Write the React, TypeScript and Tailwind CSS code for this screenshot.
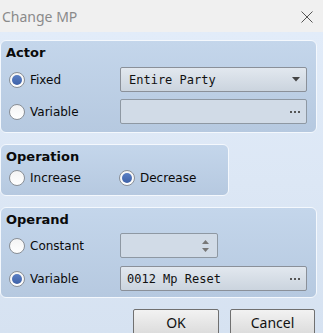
import React from "react";

const ui = { fontFamily: '"DejaVu Sans", Verdana, sans-serif' };
const mono = { fontFamily: '"DejaVu Sans Mono", "Liberation Mono", monospace' };

interface RadioProps {
  label: string;
  checked?: boolean;
  width?: string;
}

const Radio: React.FC<RadioProps> = ({ label, checked, width = "w-[111px]" }) => {
  return (
    <div className={`flex flex-row items-center gap-[5px] shrink-0 ${width}`}>
      <div className="w-[16px] h-[16px] rounded-full border border-[#8a8f96] bg-gradient-to-b from-[#f4f4f4] to-[#ffffff] flex items-center justify-center shrink-0">
        {checked && (
          <div className="w-[10px] h-[10px] rounded-full bg-gradient-to-b from-[#5a7fc4] to-[#3f62a8]" />
        )}
      </div>
      <span className="text-[12px] leading-[16px] text-[#0a0a0a]" style={ui}>
        {label}
      </span>
    </div>
  );
};

const Dots = () => (
  <div className="flex flex-row gap-[2px] items-center">
    <div className="w-[2px] h-[2px] bg-[#555]" />
    <div className="w-[2px] h-[2px] bg-[#555]" />
    <div className="w-[2px] h-[2px] bg-[#555]" />
  </div>
);

const Panel: React.FC<{ title: string; className?: string; children: React.ReactNode }> = ({
  title,
  className = "",
  children,
}) => (
  <div
    className={`rounded-[6px] border border-[#f4f8fd] bg-gradient-to-b from-[#c4d6eb] to-[#b6c9e0] pl-[5px] pr-[9px] ${className}`}
  >
    <div className="text-[13px] leading-[16px] font-bold text-[#0a0a0a]" style={ui}>
      {title}
    </div>
    {children}
  </div>
);

export default function App() {
  return (
    <div className="w-[323px] h-[333px] overflow-hidden flex flex-col bg-[#dde8f6]">
      {/* title bar */}
      <div className="h-[32px] shrink-0 bg-[#f0f0f0] flex flex-row items-center justify-between pl-[2px] pr-[10px]">
        <span
          className="text-[14px] text-[#8a8a8a]"
          style={{ fontFamily: '"Noto Sans", "Open Sans", sans-serif' }}
        >
          Change MP
        </span>
        <svg width="12" height="12" viewBox="0 0 12 12" className="mt-[1px]">
          <path d="M0.5 0.5 L11.5 11.5 M11.5 0.5 L0.5 11.5" stroke="#555" strokeWidth="1" />
        </svg>
      </div>

      <div className="flex-1 bg-gradient-to-b from-[#e2ecf9] to-[#d6e2f1] pt-[8px] pr-[6px] flex flex-col gap-[11px]">
        {/* Actor */}
        <Panel title="Actor" className="h-[93px] pt-[4px]">
          <div className="flex flex-col gap-[7px] mt-[6px] pl-[3px]">
            <div className="flex flex-row items-center">
              <Radio label="Fixed" checked />
              <div className="w-[187px] h-[25px] rounded-[2px] border border-[#8a9099] bg-gradient-to-b from-[#e2e8ef] to-[#cbd4de] flex flex-row items-center justify-between pl-[8px] pr-[6px]">
                <span className="text-[12px] text-[#111]" style={mono}>
                  Entire Party
                </span>
                <svg width="8" height="5" viewBox="0 0 8 5">
                  <path d="M0 0 H8 L4 4.5 Z" fill="#444" />
                </svg>
              </div>
            </div>
            <div className="flex flex-row items-center">
              <Radio label="Variable" />
              <div className="w-[187px] h-[25px] rounded-[2px] border border-[#8e98a3] bg-[#d1dbe7] flex flex-row items-center justify-end pr-[6px]">
                <Dots />
              </div>
            </div>
          </div>
        </Panel>

        {/* Operation */}
        <Panel title="Operation" className="w-[229px] h-[52px] pt-[4px]">
          <div className="flex flex-row items-center mt-[5px] pl-[3px]">
            <Radio label="Increase" width="w-[110px]" />
            <Radio label="Decrease" checked width="w-auto" />
          </div>
        </Panel>

        {/* Operand */}
        <Panel title="Operand" className="h-[91px] pt-[4px]">
          <div className="flex flex-col gap-[8px] mt-[5px] pl-[3px]">
            <div className="flex flex-row items-center">
              <Radio label="Constant" />
              <div className="w-[98px] h-[25px] rounded-[2px] border border-[#8e98a3] bg-[#d1dbe7] flex flex-row items-center justify-end pr-[8px]">
                <div className="flex flex-col gap-[4px]">
                  <svg width="7" height="4" viewBox="0 0 7 4">
                    <path d="M0 4 H7 L3.5 0 Z" fill="#777" />
                  </svg>
                  <svg width="7" height="4" viewBox="0 0 7 4">
                    <path d="M0 0 H7 L3.5 4 Z" fill="#777" />
                  </svg>
                </div>
              </div>
            </div>
            <div className="flex flex-row items-center">
              <Radio label="Variable" checked />
              <div className="w-[187px] h-[25px] rounded-[2px] border border-[#8a9099] bg-gradient-to-b from-[#e2e8ef] to-[#cbd4de] flex flex-row items-center justify-between pl-[6px] pr-[6px]">
                <span className="text-[12px] text-[#111]" style={mono}>
                  0012 Mp Reset
                </span>
                <Dots />
              </div>
            </div>
          </div>
        </Panel>

        {/* buttons */}
        <div className="flex flex-row justify-end gap-[11px] pr-[2px]">
          <button
            className="w-[86px] h-[26px] rounded-[2px] border border-[#707070] bg-gradient-to-b from-[#f2f2f2] to-[#dcdcdc] text-[14px] text-[#111]"
            style={{ fontFamily: '"Noto Sans", "Open Sans", sans-serif' }}
          >
            OK
          </button>
          <button
            className="w-[85px] h-[26px] rounded-[2px] border border-[#707070] bg-gradient-to-b from-[#f2f2f2] to-[#dcdcdc] text-[14px] text-[#111]"
            style={{ fontFamily: '"Noto Sans", "Open Sans", sans-serif' }}
          >
            Cancel
          </button>
        </div>
      </div>
    </div>
  );
}
